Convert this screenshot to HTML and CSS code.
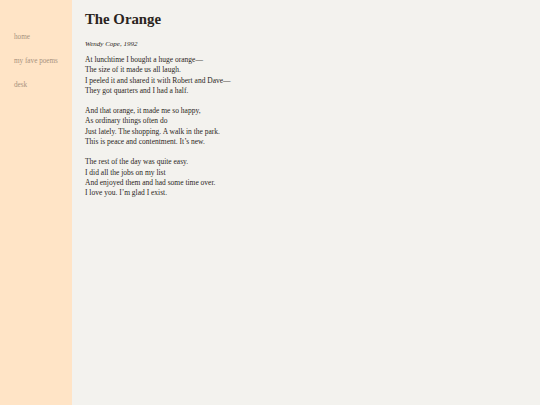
FILE: index.html
```html
<!DOCTYPE html>
<html>
<head>
<meta charset="utf-8">
<link rel="stylesheet" href="styles.css">
</head>
<body>
<div class="layout">
  <nav class="sidebar">
    <a class="nav-link" href="#">home</a>
    <a class="nav-link" href="#">my fave poems</a>
    <a class="nav-link" href="#">desk</a>
  </nav>
  <main class="content">
    <h1 class="title">The Orange</h1>
    <p class="author">Wendy Cope, 1992</p>
    <p class="stanza">At lunchtime I bought a huge orange—<br>The size of it made us all laugh.<br>I peeled it and shared it with Robert and Dave—<br>They got quarters and I had a half.</p>
    <p class="stanza">And that orange, it made me so happy,<br>As ordinary things often do<br>Just lately. The shopping. A walk in the park.<br>This is peace and contentment. It’s new.</p>
    <p class="stanza">The rest of the day was quite easy.<br>I did all the jobs on my list<br>And enjoyed them and had some time over.<br>I love you. I’m glad I exist.</p>
  </main>
</div>
</body>
</html>
```
FILE: styles.css
```css
html, body {
  margin: 0;
  padding: 0;
  height: 100%;
}
body {
  font-family: "Liberation Serif", "DejaVu Serif", serif;
  background: #f3f2ee;
  color: #2b2622;
}
.layout {
  display: flex;
  min-height: 100%;
}
.sidebar {
  width: 72px;
  flex: 0 0 72px;
  background: #ffe4c6;
  display: flex;
  flex-direction: column;
  gap: 14px;
  padding: 32px 0 0 14px;
  box-sizing: border-box;
}
.nav-link {
  font-size: 7.2px;
  line-height: 10px;
  color: #a8927e;
  text-decoration: none;
  white-space: nowrap;
}
.content {
  flex: 1;
  padding: 9px 0 0 13px;
}
.title {
  margin: 0;
  font-size: 14.8px;
  line-height: 20px;
  font-weight: bold;
  color: #2a2420;
}
.author {
  margin: 10px 0 0;
  font-size: 7px;
  line-height: 10px;
  font-style: italic;
}
.stanza {
  margin: 6px 0 10px;
  font-size: 7.5px;
  line-height: 10.3px;
}
.stanza + .stanza {
  margin-top: 0;
}
```
